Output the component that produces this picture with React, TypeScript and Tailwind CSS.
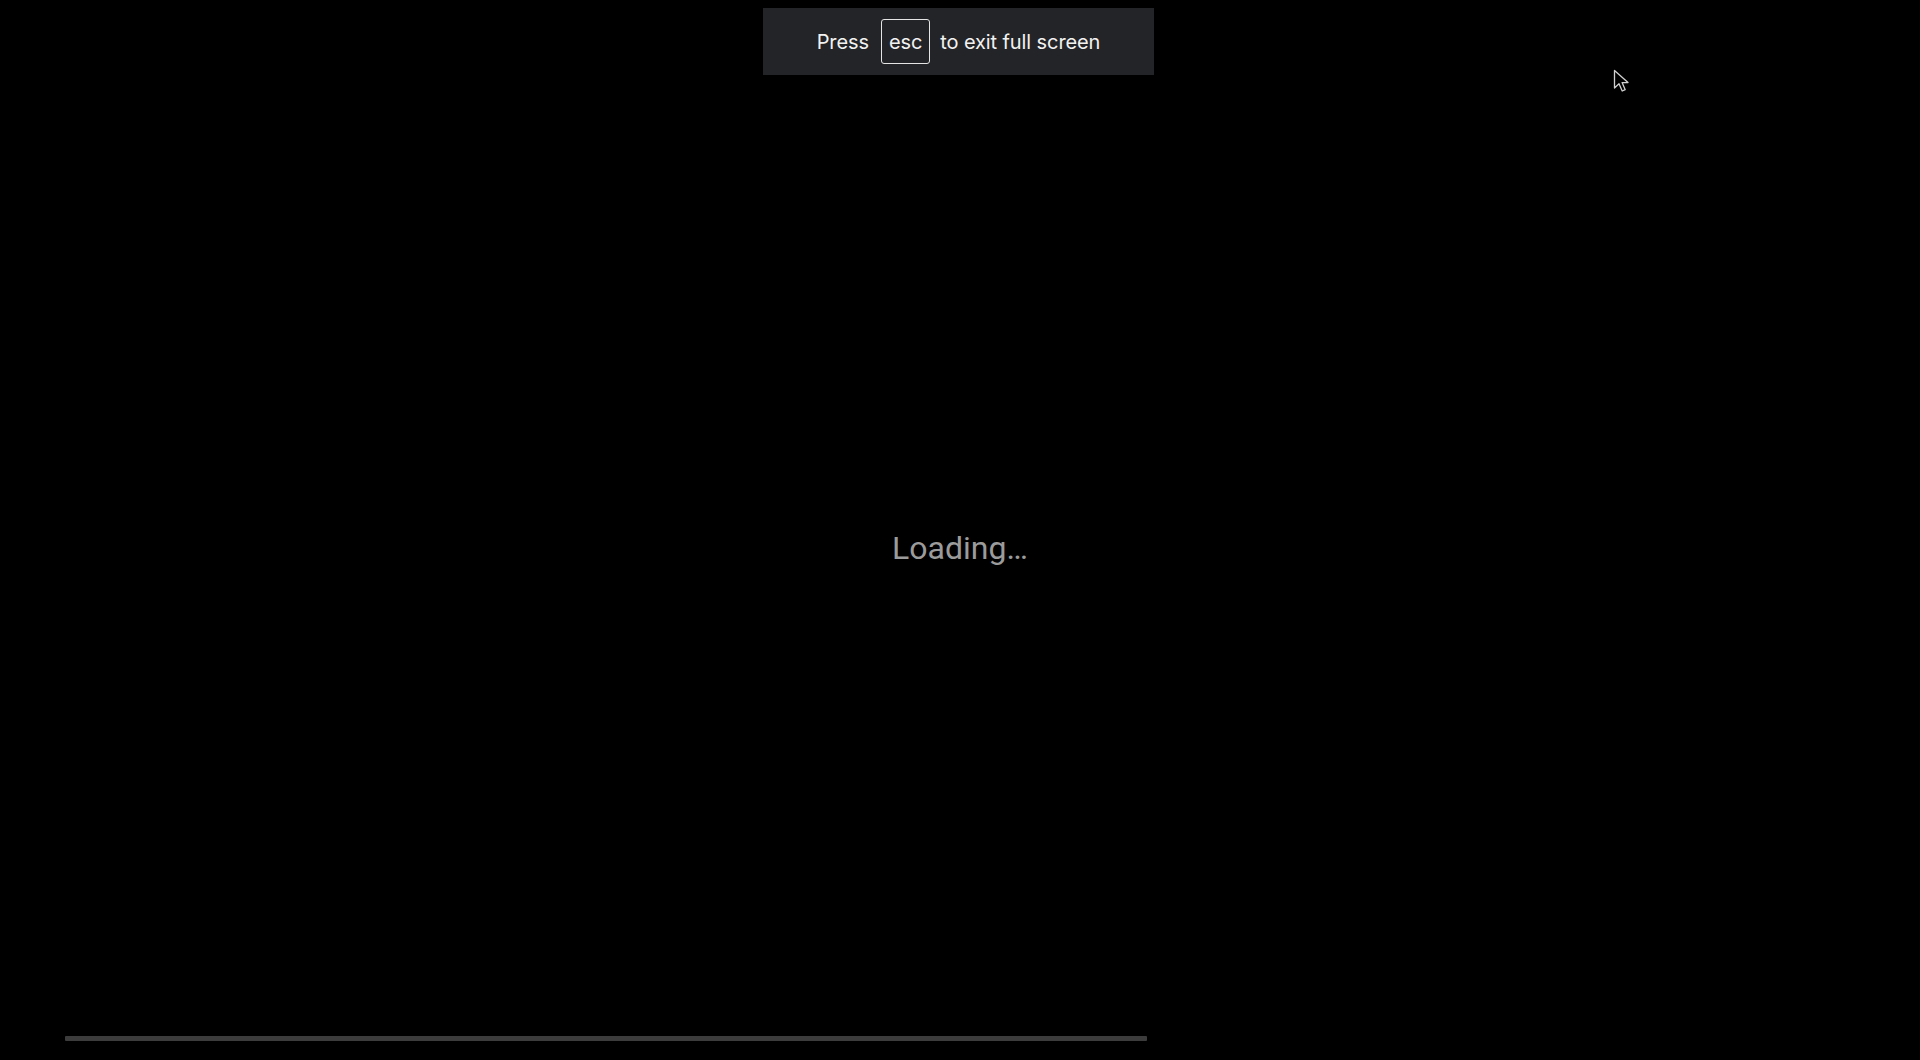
export default function App() {
  return (
    <div className="relative flex h-[1060px] w-full flex-col overflow-hidden bg-black">
      {/* fullscreen hint */}
      <div className="absolute left-[763px] top-[8px] flex h-[67px] w-[391px] items-center justify-center bg-[#232427] font-['Inter',sans-serif] text-[20px] tracking-[-0.1px] text-[#f2f2f2]">
        <span>Press</span>
        <span className="ml-[12px] mr-[10px] flex h-[45px] items-center rounded-[3px] border border-[#e5e5e5] px-[7px]">
          esc
        </span>
        <span>to exit full screen</span>
      </div>

      {/* mouse pointer */}
      <svg
        className="absolute left-[1613px] top-[69px]"
        width="20"
        height="25"
        viewBox="0 0 20 25"
      >
        <path
          d="M1.5 1.5 L1.5 19 L6 14.8 L9.2 22 L12.2 20.7 L9.1 13.6 L15 13.6 Z"
          fill="#000"
          stroke="#d0d0d0"
          strokeWidth="1.3"
          strokeLinejoin="round"
        />
      </svg>

      <div className="flex flex-1 items-center justify-center pt-[60px]">
        <span className="font-['Roboto',sans-serif] text-[32px] text-[#9b9b9b]">Loading…</span>
      </div>

      {/* progress track */}
      <div className="mb-[19px] ml-[65px] h-[5px] w-[1082px] rounded-[1px] bg-[#3c3c3c]" />
    </div>
  );
}
